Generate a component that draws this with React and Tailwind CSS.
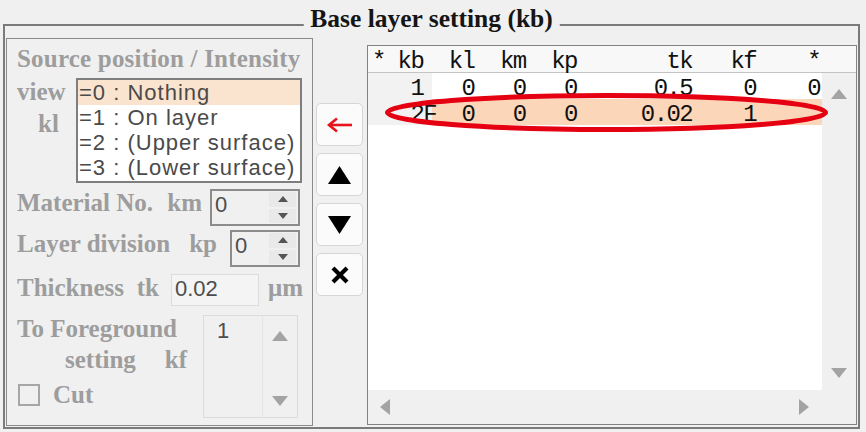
import React from 'react';

const listItems = ['=0 : Nothing', '=1 : On layer', '=2 : (Upper surface)', '=3 : (Lower surface)'];

const header = '* kb  kl  km  kp       tk   kf    *';
const rows = [
  { text: '   1   0   0   0      0.5    0    0', bg: 'bg-[linear-gradient(to_right,#f2f2f2_64px,#ffffff_64px)]' },
  { text: '   2F  0   0   0     0.02    1', bg: 'bg-[linear-gradient(to_right,#f2f2f2_64px,#fbd6b8_64px)]' },
];

function Tri({ dir = 'up', w = 16, h = 10, color = '#a3a3a3' }) {
  const pts = {
    up: `0,${h} ${w / 2},0 ${w},${h}`,
    down: `0,0 ${w},0 ${w / 2},${h}`,
    left: `${w},0 ${w},${h} 0,${h / 2}`,
    right: `0,0 ${w},${h / 2} 0,${h}`,
  }[dir];
  return (
    <svg width={w} height={h} viewBox={`0 0 ${w} ${h}`} className="block">
      <polygon points={pts} fill={color} />
    </svg>
  );
}

function SpinBox({ width, value }) {
  return (
    <div className={`${width} h-[37px] border-2 border-[#8c8c8c] flex font-['Liberation_Sans',Arial,sans-serif] font-normal text-[22px] text-[#4d4d4d]`}>
      <span className="flex-1 pl-[3px] leading-[27px]">{value}</span>
      {/* spin buttons */}
      <div className="w-[27px] mr-[2px] my-[1px] flex flex-col gap-[2px]">
        <div className="flex-1 bg-[#e9e9e9] flex items-center justify-center">
          <Tri dir="up" w={10} h={6} color="#555" />
        </div>
        <div className="flex-1 bg-[#e9e9e9] flex items-center justify-center">
          <Tri dir="down" w={10} h={6} color="#555" />
        </div>
      </div>
    </div>
  );
}

function ToolButton({ children }) {
  return (
    <button className="w-[47px] h-[43px] rounded-[5px] border border-[#d6d6d6] bg-[#fbfbfb] flex items-center justify-center">
      {children}
    </button>
  );
}

export default function App() {
  return (
    <div className="relative w-[866px] h-[432px] overflow-hidden bg-[#f0f0f0] pt-[24px] pl-[3px]">
      <div className="relative w-[857px] h-[405px] border-2 border-[#7a7a7a] flex">
        {/* Group title on the frame */}
        <span className="absolute left-1/2 -translate-x-1/2 top-[-21px] px-[7px] bg-[#f0f0f0] whitespace-nowrap font-['Liberation_Serif','Times_New_Roman',serif] font-bold text-[25.5px] leading-[28px] text-[#151515]">
          Base layer setting (kb)
        </span>

        {/* Left panel (disabled form) */}
        <div className="ml-[1px] mt-[12px] w-[307px] h-[388px] border border-[#8a8a8a] flex flex-col pl-[10px] pt-[6px] font-['Liberation_Serif','Times_New_Roman',serif] font-bold text-[25px] leading-[28px] text-[#9d9d9d]">
          <div className="whitespace-nowrap tracking-[0.2px]">Source position / Intensity</div>

          <div className="flex mt-[5px]">
            <div className="w-[59px] flex flex-col">
              <span>view</span>
              <span className="mt-[4px] pl-[21px]">kl</span>
            </div>
            <div className="w-[226px] h-[105px] border-2 border-[#7e7e7e] bg-white font-['Liberation_Sans',Arial,sans-serif] font-normal text-[22px] leading-[25px] tracking-[1px] text-[#4a4a4a]">
              {listItems.map((t, i) => (
                <div key={t} className={`h-[25px] pl-[1px] whitespace-pre ${i === 0 ? 'bg-[#fbe4cf]' : ''}`}>{t}</div>
              ))}
            </div>
          </div>

          <div className="flex items-start mt-[6px]">
            <div className="w-[193px] flex justify-between pr-[8px] whitespace-nowrap">
              <span>Material No.</span>
              <span>km</span>
            </div>
            <SpinBox width="w-[90px]" value="0" />
          </div>

          <div className="flex items-start mt-[4px]">
            <div className="w-[213px] flex justify-between pr-[13px] whitespace-nowrap">
              <span>Layer division</span>
              <span>kp</span>
            </div>
            <SpinBox width="w-[70px]" value="0" />
          </div>

          <div className="flex items-start mt-[7px]">
            <div className="w-[154px] flex justify-between pr-[12px] whitespace-nowrap">
              <span>Thickness</span>
              <span>tk</span>
            </div>
            <div className="w-[88px] h-[32px] border border-[#dcdcdc] bg-[#f4f4f4] pl-[3px] font-['Liberation_Sans',Arial,sans-serif] font-normal text-[22px] leading-[28px] text-[#4d4d4d]">
              0.02
            </div>
            <span className="ml-[9px]">μm</span>
          </div>

          <div className="flex mt-[9px]">
            <div className="w-[186px] flex flex-col">
              <span className="whitespace-nowrap">To Foreground</span>
              <div className="flex mt-[3px] pl-[48px]">
                <span>setting</span>
                <span className="ml-[29px]">kf</span>
              </div>
              <div className="flex items-center h-[28px] mt-[7px] pl-[1px]">
                <span className="w-[22px] h-[22px] border-2 border-[#a6a6a6]" />
                <span className="ml-[13px]">Cut</span>
              </div>
            </div>
            <div className="w-[95px] h-[103px] border border-[#dcdcdc] flex">
              <div className="flex-1 pl-[13px] pt-[2px] font-['Liberation_Sans',Arial,sans-serif] font-normal text-[22px] leading-[25px] text-[#4d4d4d]">1</div>
              <div className="w-[35px] border-l border-[#e4e4e4] flex flex-col items-center justify-between pt-[15px] pb-[11px]">
                <Tri dir="up" w={16} h={10} />
                <Tri dir="down" w={16} h={10} />
              </div>
            </div>
          </div>
        </div>

        {/* Tool buttons */}
        <div className="ml-[3px] pt-[77px] flex flex-col gap-[7px]">
          <ToolButton>
            <svg width="28" height="16" viewBox="0 0 28 16">
              <path d="M3 8 H26" stroke="#e8141c" strokeWidth="2.6" fill="none" />
              <path d="M11 1.5 L3 8 L11 14.5" stroke="#e8141c" strokeWidth="2.6" fill="none" />
            </svg>
          </ToolButton>
          <ToolButton>
            <Tri dir="up" w={23} h={18} color="#000" />
          </ToolButton>
          <ToolButton>
            <Tri dir="down" w={23} h={18} color="#000" />
          </ToolButton>
          <ToolButton>
            <svg width="20" height="18" viewBox="0 0 20 18">
              <path d="M3 2 L17 16 M17 2 L3 16" stroke="#000" strokeWidth="4.2" fill="none" />
            </svg>
          </ToolButton>
        </div>

        {/* Layer list */}
        <div className="ml-[4px] mt-[19px] w-[490px] h-[380px] border border-[#828282] bg-white flex flex-col font-['Liberation_Mono','Courier_New',monospace] text-[24px] tracking-[-1.6px] text-[#111]">
          <div className="h-[27px] shrink-0 border-b border-[#c4c4c4] bg-[#f8f8f8] pl-[4px] leading-[31px] whitespace-pre">{header}</div>
          <div className="flex-1 flex flex-col">
            <div className="flex-1 flex">
              <div className="flex-1 flex flex-col">
                {rows.map((r, i) => (
                  <div key={i} className={`h-[26px] pl-[4px] leading-[32px] whitespace-pre ${r.bg}`}>{r.text}</div>
                ))}
              </div>
              <div className="w-[34px] bg-[#f0f0f0] flex flex-col items-center justify-between pt-[16px] pb-[12px]">
                <Tri dir="up" w={16} h={10} />
                <Tri dir="down" w={16} h={10} />
              </div>
            </div>
            <div className="h-[34px] shrink-0 flex">
              <div className="flex-1 bg-[#f0f0f0] flex items-center justify-between pl-[12px] pr-[13px]">
                <Tri dir="left" w={10} h={16} />
                <Tri dir="right" w={10} h={16} />
              </div>
              <div className="w-[34px] bg-[#f0f0f0]" />
            </div>
          </div>
        </div>
      </div>

      {/* Red annotation ellipse */}
      <svg className="absolute left-0 top-0 pointer-events-none" width="866" height="432" viewBox="0 0 866 432">
        <ellipse cx="606.5" cy="112.5" rx="219" ry="17" fill="none" stroke="#e50012" strokeWidth="5" />
      </svg>
    </div>
  );
}
